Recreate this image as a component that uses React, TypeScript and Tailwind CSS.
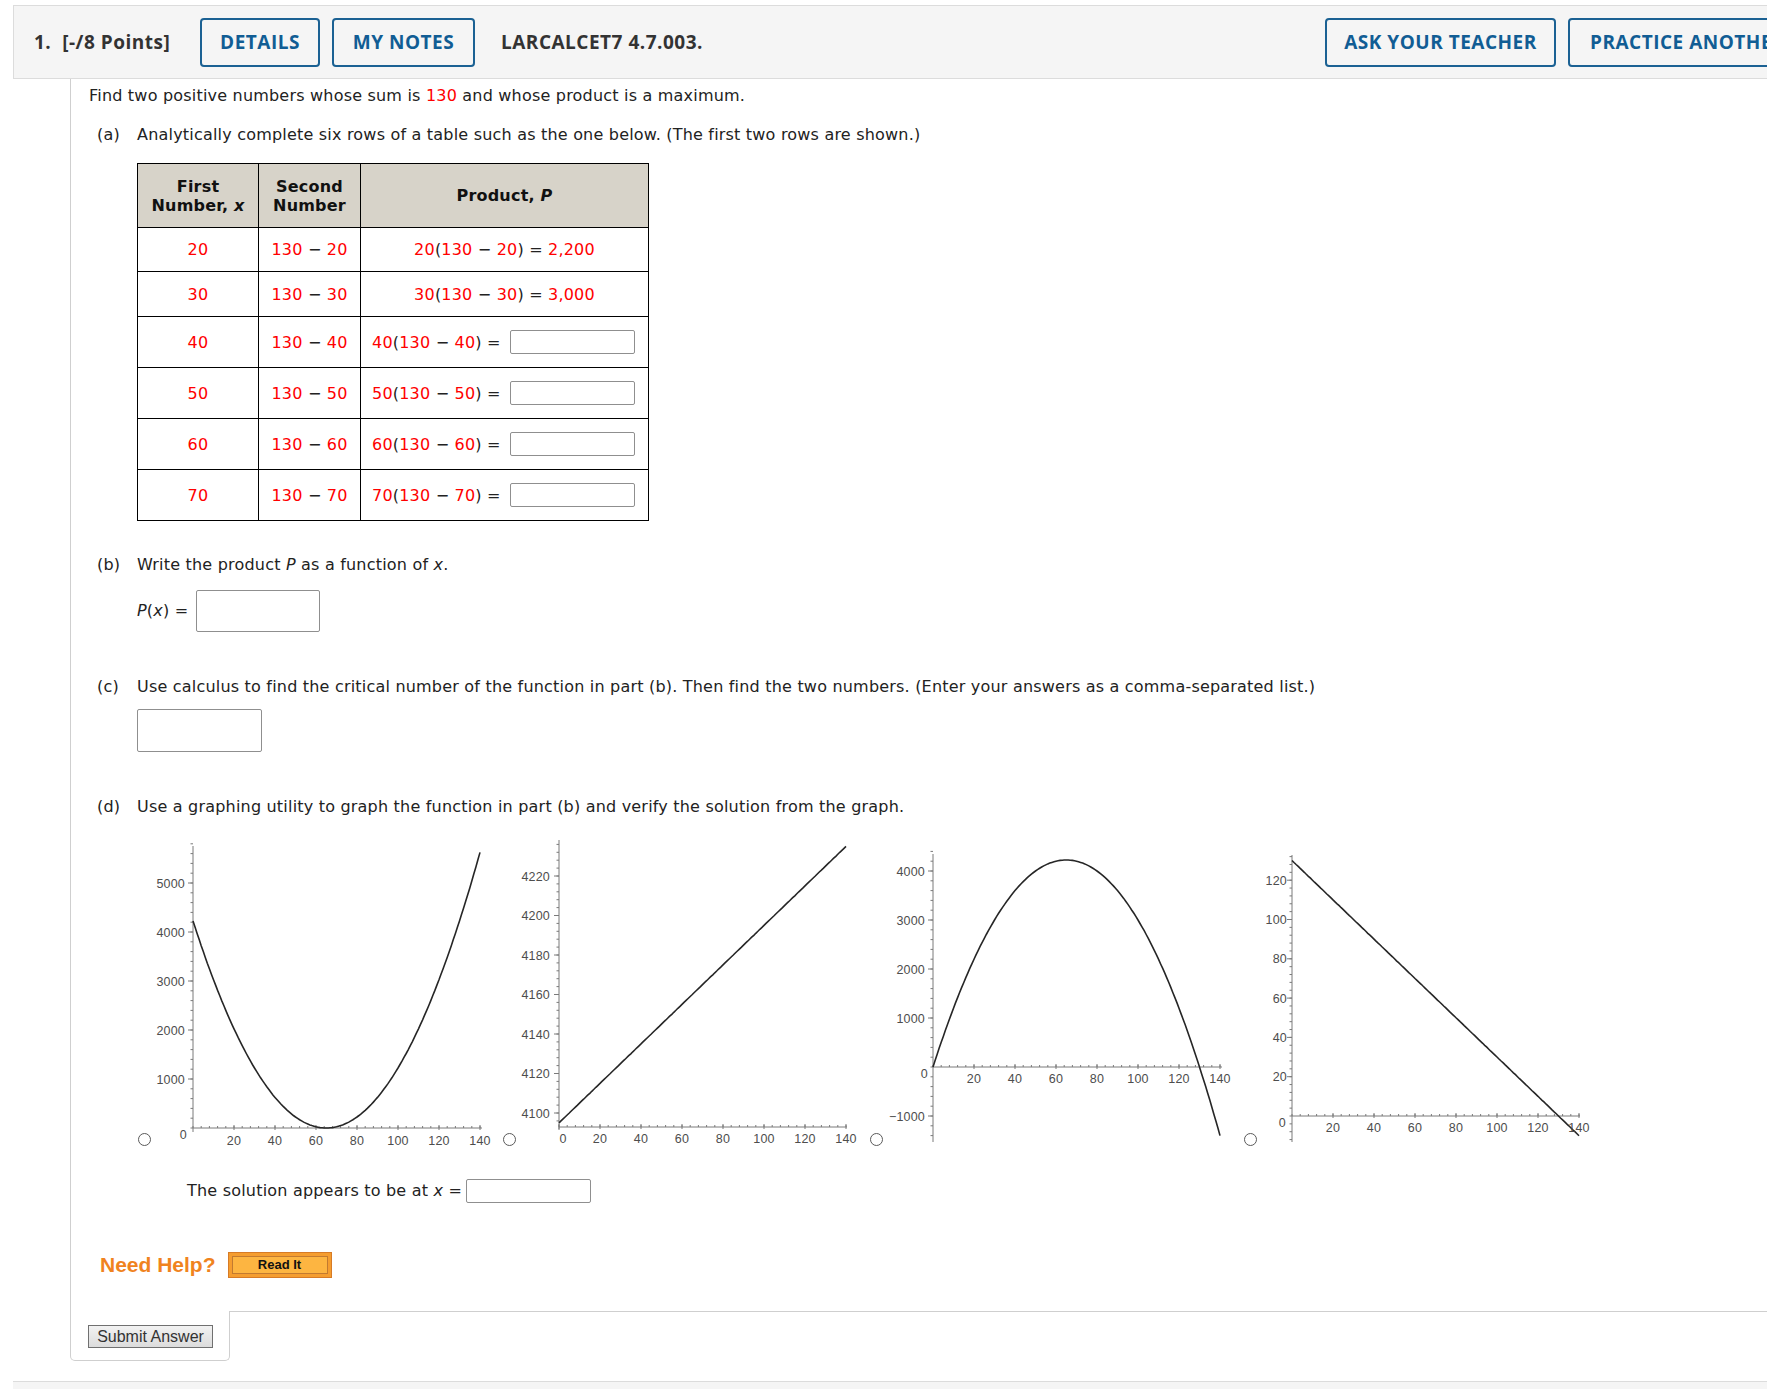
import React from 'react';

const range = (a: number, b: number, s: number) => {
  const out: number[] = [];
  for (let v = a; v <= b + 1e-9; v += s) out.push(v);
  return out;
};

type GraphProps = {
  left: number;
  width: number;
  x0: number;
  axisY: number;
  xEnd: number;
  yTop: number;
  yBottom: number;
  yPix: (v: number) => number;
  yMajors: number[];
  yMinors: number[];
  gap: number;
  xLabels: number[];
  xLabelY: number;
  zero?: { x: number; y: number; anchor: 'end' | 'middle' | 'start' };
  f: (x: number) => number;
};

function Graph({ left, width, x0, axisY, xEnd, yTop, yBottom, yPix, yMajors, yMinors, gap, xLabels, xLabelY, zero, f }: GraphProps) {
  const X = (x: number) => x0 + x * 2.05;
  const pts = range(0, 140, 1).map((x) => `${X(x).toFixed(1)},${yPix(f(x)).toFixed(1)}`);
  const fmt = (v: number) => (v < 0 ? `\u2212${Math.abs(v)}` : `${v}`);

  return (
    <svg width={width} height={315} viewBox={`${left} 835 ${width} 315`} className="shrink-0">
      <g stroke="#7a7a7a" strokeWidth={1}>
        <line x1={x0} y1={yTop} x2={x0} y2={yBottom} />
        <line x1={x0} y1={axisY} x2={xEnd} y2={axisY} />
        {yMinors.map((v) => (
          <line key={'m' + v} x1={x0 - 2.5} x2={x0} y1={yPix(v)} y2={yPix(v)} />
        ))}
        {yMajors.map((v) => (
          <line key={'M' + v} x1={x0 - 5} x2={x0} y1={yPix(v)} y2={yPix(v)} />
        ))}
        {range(0, 140, 4).map((x) => (
          <line key={'x' + x} x1={X(x)} x2={X(x)} y1={axisY - 2} y2={axisY} />
        ))}
        {xLabels.map((x) => (
          <line key={'X' + x} x1={X(x)} x2={X(x)} y1={axisY - 3} y2={axisY + 2} />
        ))}
      </g>
      <polyline points={pts.join(' ')} fill="none" stroke="#262626" strokeWidth={1.6} />
      <g fontSize={12.5} fill="#4d4d4d" fontFamily="'Liberation Sans', Arial, sans-serif">
        {yMajors.map((v) => (
          <text key={'t' + v} x={x0 - gap} y={yPix(v) + 4.5} textAnchor="end">
            {fmt(v)}
          </text>
        ))}
        {xLabels.map((x) => (
          <text key={'u' + x} x={x === 0 ? X(x) + 4 : X(x)} y={xLabelY} textAnchor="middle">
            {x}
          </text>
        ))}
        {zero && (
          <text x={zero.x} y={zero.y} textAnchor={zero.anchor}>
            0
          </text>
        )}
      </g>
    </svg>
  );
}

function Radio() {
  return <div className="mt-[298px] h-[13px] w-[13px] shrink-0 rounded-full border border-[#5a5a5a] bg-white" />;
}

function Box({ className }: { className: string }) {
  return <div className={`border border-[#8f8f8f] bg-white rounded-[2px] ${className}`} />;
}

const Op = ({ children }: { children: React.ReactNode }) => <span className="text-[#222]">{children}</span>;
const R = ({ children }: { children: React.ReactNode }) => <span className="text-[#ff0000]">{children}</span>;

function Expr({ n }: { n: number }) {
  return (
    <>
      <R>{n}</R>
      <Op>(</Op>
      <R>130</R>
      <Op> − </Op>
      <R>{n}</R>
      <Op>)</Op>
      <Op> = </Op>
    </>
  );
}

export default function App() {
  const rows = [20, 30, 40, 50, 60, 70];
  const done: Record<number, string> = { 20: '2,200', 30: '3,000' };

  return (
    <div className="min-h-[1389px] w-full overflow-hidden bg-white font-['DejaVu_Sans',Verdana,sans-serif] text-[#222]">
      {/* question header */}
      <div className="pl-[13px] pt-[5px]">
        <div className="flex h-[74px] w-[1860px] items-center border border-[#dcdcdc] bg-[#f5f5f5] pl-[20px] font-['Open_Sans',sans-serif] text-[19px] font-bold tracking-[0.5px]">
          <div className="flex w-[1291px] items-center">
            <span className="w-[166px] text-[#333]">1.&nbsp; [-/8 Points]</span>
            <button className="h-[49px] w-[120px] rounded-[4px] border-2 border-[#1b6193] text-[#115d94]">DETAILS</button>
            <button className="ml-[12px] h-[49px] w-[143px] rounded-[4px] border-2 border-[#1b6193] text-[#115d94]">MY NOTES</button>
            <span className="ml-[26px] text-[#333]">LARCALCET7 4.7.003.</span>
          </div>
          <button className="h-[49px] w-[231px] rounded-[4px] border-2 border-[#1b6193] text-[#115d94]">ASK YOUR TEACHER</button>
          <button className="ml-[12px] h-[49px] rounded-[4px] border-2 border-[#1b6193] px-[20px] text-[#115d94]">PRACTICE ANOTHER</button>
        </div>
      </div>

      <div className="ml-[70px]">
        <div className="border-l border-[#cfcfcf] pb-[33px] pl-[18px] pt-[5px] text-[16px] leading-[24px] tracking-[0.2px]">
          <p>
            Find two positive numbers whose sum is <R>130</R> and whose product is a maximum.
          </p>

          <div className="mt-[15px] flex">
            <span className="w-[48px] pl-[8px]">(a)</span>
            <span>Analytically complete six rows of a table such as the one below. (The first two rows are shown.)</span>
          </div>

          <table className="ml-[48px] mt-[16px] w-[512px] table-fixed border-collapse border border-black text-center leading-[19px]">
            <thead>
              <tr className="h-[64px] bg-[#d7d3c9] font-bold text-[#111]">
                <th className="w-[121px] border border-black">
                  First
                  <br />
                  Number, <i>x</i>
                </th>
                <th className="w-[102px] border border-black">
                  Second
                  <br />
                  Number
                </th>
                <th className="border border-black">
                  Product, <i>P</i>
                </th>
              </tr>
            </thead>
            <tbody>
              {rows.map((n, i) => (
                <tr key={n} className={i === 0 ? 'h-[44px]' : i === 1 ? 'h-[45px]' : 'h-[51px]'}>
                  <td className="border border-black">
                    <R>{n}</R>
                  </td>
                  <td className="border border-black">
                    <R>130</R>
                    <Op> − </Op>
                    <R>{n}</R>
                  </td>
                  <td className="border border-black">
                    {done[n] ? (
                      <span>
                        <Expr n={n} />
                        <R>{done[n]}</R>
                      </span>
                    ) : (
                      <div className="flex items-center pl-[11px]">
                        <span className="whitespace-pre">
                          <Expr n={n} />
                        </span>
                        <Box className="ml-[4px] h-[24px] w-[125px]" />
                      </div>
                    )}
                  </td>
                </tr>
              ))}
            </tbody>
          </table>

          <div className="mt-[32px] flex">
            <span className="w-[48px] pl-[8px]">(b)</span>
            <span>
              Write the product <i>P</i> as a function of <i>x</i>.
            </span>
          </div>
          <div className="ml-[48px] mt-[13px] flex items-center">
            <span>
              <i>P</i>(<i>x</i>) =
            </span>
            <Box className="ml-[8px] h-[42px] w-[124px]" />
          </div>

          <div className="mt-[43px] flex">
            <span className="w-[48px] pl-[8px]">(c)</span>
            <span>
              Use calculus to find the critical number of the function in part (b). Then find the two numbers. (Enter your answers as a comma-separated list.)
            </span>
          </div>
          <Box className="ml-[48px] mt-[10px] h-[43px] w-[125px]" />

          <div className="mt-[43px] flex">
            <span className="w-[48px] pl-[8px]">(d)</span>
            <span>Use a graphing utility to graph the function in part (b) and verify the solution from the graph.</span>
          </div>

          <div className="ml-[48px] mt-[16px] flex h-[315px] items-start">
            <div className="ml-[1px]">
              <Radio />
            </div>
            <Graph
              left={151}
              width={352}
              x0={193}
              axisY={1128}
              xEnd={482}
              yTop={846}
              yBottom={1132}
              yPix={(v) => 1128 - v * 0.049}
              yMajors={[1000, 2000, 3000, 4000, 5000]}
              yMinors={range(0, 5800, 200)}
              gap={8}
              xLabels={[20, 40, 60, 80, 100, 120, 140]}
              xLabelY={1144.5}
              zero={{ x: 187, y: 1138.5, anchor: 'end' }}
              f={(x) => (x - 65) * (x - 65)}
            />
            <Radio />
            <Graph
              left={516}
              width={354}
              x0={559}
              axisY={1127}
              xEnd={847}
              yTop={840}
              yBottom={1130}
              yPix={(v) => 1113 - (v - 4100) * 1.975}
              yMajors={[4100, 4120, 4140, 4160, 4180, 4200, 4220]}
              yMinors={range(4096, 4236, 4)}
              gap={9}
              xLabels={[0, 20, 40, 60, 80, 100, 120, 140]}
              xLabelY={1142.5}
              f={(x) => x + 4095}
            />
            <Radio />
            <Graph
              left={883}
              width={361}
              x0={933}
              axisY={1067}
              xEnd={1222}
              yTop={854}
              yBottom={1142}
              yPix={(v) => 1067 - v * 0.049}
              yMajors={[-1000, 1000, 2000, 3000, 4000]}
              yMinors={range(-1400, 4400, 200)}
              gap={8}
              xLabels={[20, 40, 60, 80, 100, 120, 140]}
              xLabelY={1082.5}
              zero={{ x: 928, y: 1077.5, anchor: 'end' }}
              f={(x) => x * (130 - x)}
            />
            <Radio />
            <Graph
              left={1257}
              width={343}
              x0={1292}
              axisY={1116}
              xEnd={1580}
              yTop={855}
              yBottom={1142}
              yPix={(v) => 1116 - v * 1.965}
              yMajors={[20, 40, 60, 80, 100, 120]}
              yMinors={range(-12, 134, 4)}
              gap={5}
              xLabels={[20, 40, 60, 80, 100, 120, 140]}
              xLabelY={1131.5}
              zero={{ x: 1286, y: 1126.5, anchor: 'end' }}
              f={(x) => 130 - x}
            />
          </div>

          <div className="ml-[98px] mt-[29px] flex h-[24px] items-center">
            <span>
              The solution appears to be at <i>x</i> =
            </span>
            <Box className="ml-[4px] h-[24px] w-[125px]" />
          </div>

          <div className="ml-[11px] mt-[49px] flex h-[26px] items-center tracking-normal">
            <span className="font-['Liberation_Sans',Arial,sans-serif] text-[21px] font-bold text-[#f0831e]">Need Help?</span>
            <button className="ml-[12px] flex h-[26px] w-[104px] items-center justify-center border border-[#d77b26] bg-[#f59d2f] p-[3px]">
              <span className="flex h-full w-full items-center justify-center border border-[#c27a30] bg-[#fdb541] font-['Liberation_Sans',Arial,sans-serif] text-[13px] font-bold text-[#111]">
                Read It
              </span>
            </button>
          </div>
        </div>

        <div className="flex">
          <div className="h-[50px] w-[160px] rounded-b-[5px] border-b border-l border-r border-[#cfcfcf] pl-[17px] pt-[14px]">
            <button className="h-[23px] w-[125px] border border-[#707070] bg-gradient-to-b from-[#f2f2f2] to-[#dcdcdc] font-['Liberation_Sans',Arial,sans-serif] text-[16px] leading-[21px] text-[#333]">
              Submit Answer
            </button>
          </div>
          <div className="flex-1 border-t border-[#cfcfcf]" />
        </div>
      </div>

      <div className="ml-[13px] mt-[20px] h-[12px] border-t border-[#dcdcdc] bg-[#f5f5f5]" />
    </div>
  );
}
